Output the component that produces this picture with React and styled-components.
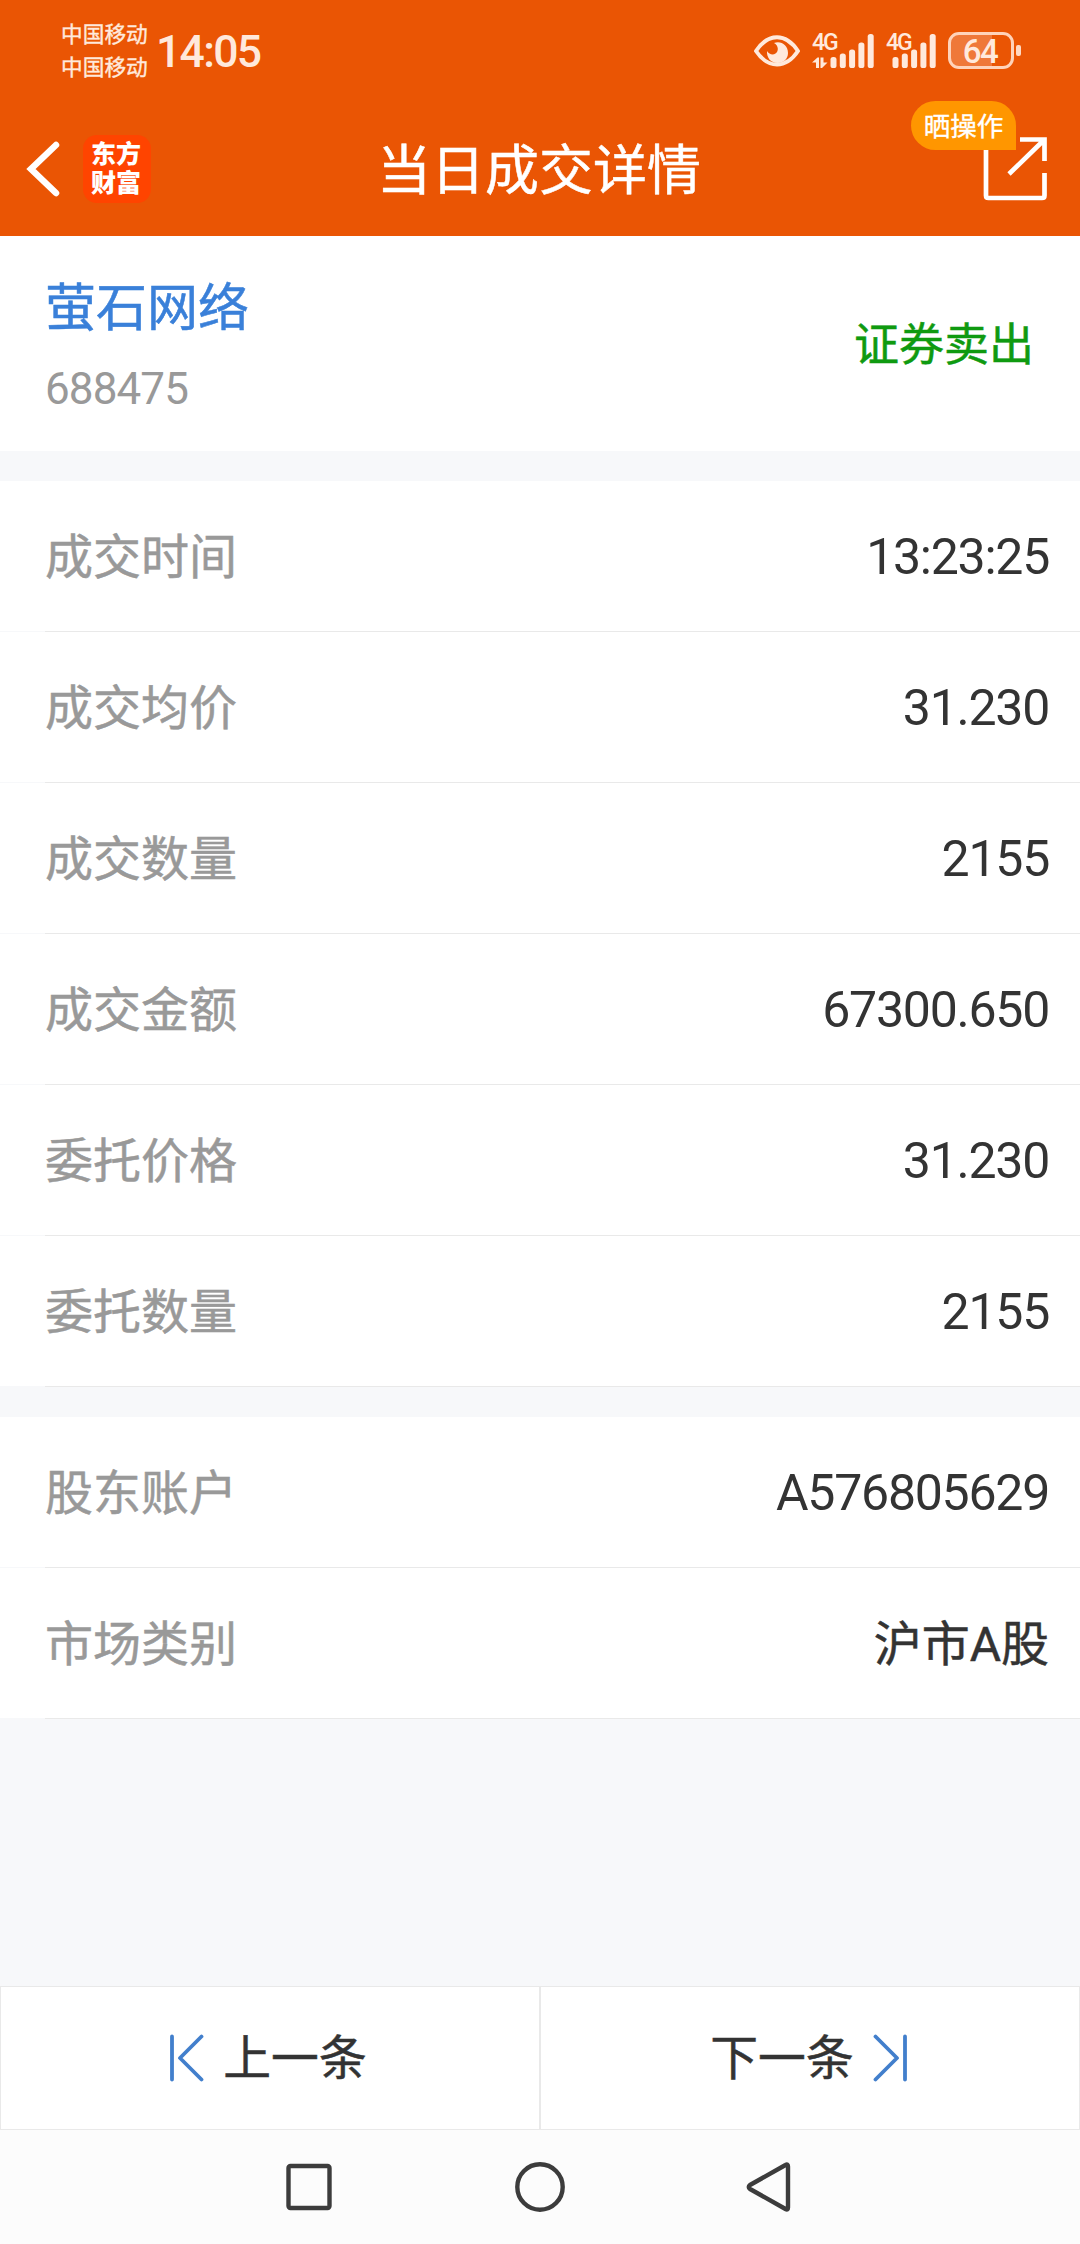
import React from "react";
import styled, { createGlobalStyle } from "styled-components";

const GlobalStyle = createGlobalStyle`
  * {
    box-sizing: border-box;
  }

  body {
    margin: 0;
    font-family: Roboto, 'Noto Sans CJK SC', sans-serif;
    background: #f7f8fa;
  }

  svg {
    display: block;
    flex-shrink: 0;
  }
`;

const Page = styled.div`
  display: flex;
  flex-direction: column;
  width: 1080px;
  height: 2244px;
  overflow: hidden;
`;

const Header = styled.header`
  height: 236px;
  background: #ea5504;
  color: white;
`;

const StatusBar = styled.div`
  display: flex;
  align-items: center;
  height: 101px;
  padding: 0 59px 0 61px;
  color: #ffe9dc;
`;

const Carriers = styled.div`
  width: 95px;
  font-size: 21.7px;
  line-height: 33px;
  white-space: nowrap;
  -webkit-text-stroke: 0.4px;
`;

const Clock = styled.div`
  padding-top: 2px;
  font-size: 44.5px;
  font-weight: 500;
  letter-spacing: -1.7px;
`;

const StatusIcons = styled.div`
  display: flex;
  align-items: center;
  margin-left: auto;
`;

const Signal = styled.div`
  position: relative;
  width: ${({ width }) => width}px;
  height: 34px;
  margin-left: 12px;
`;

const Network = styled.span`
  position: absolute;
  top: -3px;
  left: 0;
  font-size: 23px;
  font-weight: 500;
  line-height: 24px;
  letter-spacing: -2px;
`;

const Battery = styled.div`
  display: flex;
  align-items: center;
  margin-left: 12px;

  &:after {
    content: '';
    width: 5px;
    height: 11px;
    margin-left: 2px;
    border-radius: 2px;
    background: #ffd9c3;
  }
`;

const BatteryBody = styled.div`
  width: 66px;
  height: 37px;
  padding-right: 2px;
  border: 3px solid #ffd3ba;
  border-radius: 11px;
  background: linear-gradient(
    to right,
    #ef7839 ${({ level }) => level + 4}%,
    transparent ${({ level }) => level + 4}%
  );
  font-size: 33px;
  font-weight: 500;
  line-height: 33px;
  letter-spacing: -1.5px;
  text-align: center;
`;

const NavBar = styled.div`
  display: grid;
  grid-template-columns: 1fr auto 1fr;
  align-items: center;
  height: 135px;
  padding: 0 33px 0 26px;
`;

const NavLeft = styled.div`
  display: flex;
  align-items: center;
  gap: 23px;
`;

const Logo = styled.div`
  width: 68px;
  height: 68px;
  padding: 5px 0 0 8px;
  border-radius: 14px;
  background: #ff4400;
  font-size: 25px;
  font-weight: 900;
  line-height: 29px;
`;

const Title = styled.h1`
  margin: 0;
  padding: 7px 0 0 5px;
  font-size: 54px;
  font-weight: 400;
  line-height: 70px;
  -webkit-text-stroke: 0.5px;
`;

const Share = styled.div`
  position: relative;
  justify-self: end;
  width: 65px;
  height: 65px;
`;

const Badge = styled.span`
  position: absolute;
  top: -35px;
  right: 31px;
  width: 105px;
  height: 49px;
  border-radius: 25px 25px 0 25px;
  background: #ff9600;
  font-size: 26.5px;
  line-height: 52px;
  text-align: center;
  -webkit-text-stroke: 0.4px;
`;

const Summary = styled.section`
  display: flex;
  align-items: center;
  justify-content: space-between;
  height: 215px;
  padding: 0 46px 0 45px;
  background: white;
`;

const Stock = styled.div`
  padding-top: 10px;
`;

const StockName = styled.div`
  font-size: 51px;
  line-height: 80px;
  color: #3a80d9;
  -webkit-text-stroke: 0.5px;
`;

const StockCode = styled.div`
  font-size: 44px;
  line-height: 80px;
  letter-spacing: -0.9px;
  color: #999;
`;

const Direction = styled.div`
  padding-top: 5px;
  font-size: 45px;
  line-height: 60px;
  color: #0f9a10;
  -webkit-text-stroke: 0.5px;
`;

const Section = styled.section`
  margin-top: 30px;
  background: white;
`;

// the divider fades to a lighter tone under the left inset
const Row = styled.div`
  display: flex;
  align-items: center;
  justify-content: space-between;
  height: 151px;
  padding: 0 31px 0 45px;
  background: linear-gradient(to right, #f7f8fa 45px, #e9e9e9 45px) bottom /
    100% 1px no-repeat;
  font-size: 48px;
  line-height: 60px;
`;

const Label = styled.span`
  padding-top: 2px;
  color: #999;
  -webkit-text-stroke: 0.5px;
`;

const Value = styled.span`
  padding-top: ${({ text }) => (text ? 2 : 0)}px;
  font-size: ${({ text }) => (text ? 48 : 50)}px;
  letter-spacing: ${({ text }) => (text ? 0 : -1.25)}px;
  color: #333;
  -webkit-text-stroke: ${({ text }) => (text ? 0.5 : 0)}px;
`;

const Pager = styled.div`
  display: flex;
  height: 144px;
  margin-top: auto;
`;

const PagerButton = styled.button`
  display: flex;
  align-items: center;
  justify-content: center;
  gap: 19px;
  width: 50%;
  padding: 0 3px 0 0;
  border: 1px solid #e9e9e9;
  background: white;
  font-family: inherit;
  font-size: 47.8px;
  line-height: 60px;
  color: #333;
`;

const PagerText = styled.span`
  padding-top: 2px;
  -webkit-text-stroke: 0.5px;
`;

const SystemNav = styled.nav`
  display: flex;
  align-items: center;
  justify-content: center;
  gap: 180px;
  height: 114px;
  background: #fcfcfc;
`;

const DEAL_ROWS = [
  { label: "成交时间", value: "13:23:25" },
  { label: "成交均价", value: "31.230" },
  { label: "成交数量", value: "2155" },
  { label: "成交金额", value: "67300.650" },
  { label: "委托价格", value: "31.230" },
  { label: "委托数量", value: "2155" },
];

const ACCOUNT_ROWS = [
  { label: "股东账户", value: "A576805629" },
  { label: "市场类别", value: "沪市A股", text: true },
];

// top edge of each signal bar, lowest first
const BAR_TOPS = [23, 19.5, 15.5, 8.5, 0];

const EyeIcon = () => (
  <svg width="46" height="32" viewBox="0 0 46 32" fill="none">
    <path
      d="M2 16C8 7 15 2.2 23 2.2S38 7 44 16C38 25 31 29.5 23 29.5S8 25 2 16Z"
      stroke="#ffe9dc"
      strokeWidth="4"
      strokeLinejoin="round"
    />
    <path
      d="M20 8C27 5.5 34 10 34 18C34 24 29.5 28 23.5 28C17 28 12.5 23 13 16C15 19 18.5 20.5 21.5 18.5C25 16 24.5 10.5 20 8Z"
      fill="#ffe9dc"
    />
  </svg>
);

const SignalBars = ({ start, arrows }) => (
  <svg width={start + 44} height="34" fill="#ffe9dc">
    {BAR_TOPS.map((top, i) => (
      <rect
        key={top}
        x={start + i * 9.3}
        y={top}
        width="6"
        height={34 - top}
        rx="2.6"
      />
    ))}
    {arrows && (
      <path d="M0 28.5L5.5 23.5H7V34H4V28.5ZM8.5 23.5H11.5V28.5H15.5L10 34H8.5Z" />
    )}
  </svg>
);

const BackIcon = () => (
  <svg width="34" height="56" viewBox="0 0 34 56" fill="none">
    <path
      d="M30 4L5 28L30 52"
      stroke="white"
      strokeWidth="6.5"
      strokeLinecap="round"
    />
  </svg>
);

const ShareIcon = () => (
  <svg
    width="65"
    height="65"
    viewBox="0 0 65 65"
    fill="none"
    stroke="white"
    strokeWidth="4.7"
  >
    <path d="M4 14V59.5Q4 62 6.5 62H60Q62.5 62 62.5 59.5V37" />
    <path d="M38 3.5H62.5V25M61 5L27 38" />
  </svg>
);

const StepIcon = ({ flip }) => (
  <svg width="34" height="48" viewBox="0 0 34 48" fill="none">
    <path
      d="M2 2.5V45.5M31.5 2.5L10 24L31.5 45.5"
      transform={flip ? "translate(34 0) scale(-1 1)" : undefined}
      stroke="#427fcc"
      strokeWidth="3.8"
      strokeLinecap="round"
      strokeLinejoin="round"
    />
  </svg>
);

const NavIcon = ({ children }) => (
  <svg
    width="50"
    height="52"
    viewBox="0 0 50 52"
    fill="none"
    stroke="#3c3c3c"
    strokeWidth="4.4"
    strokeLinejoin="round"
  >
    {children}
  </svg>
);

const Rows = ({ rows }) => (
  <Section>
    {rows.map(({ label, value, text }) => (
      <Row key={label}>
        <Label>{label}</Label>
        <Value text={text ? 1 : undefined}>{value}</Value>
      </Row>
    ))}
  </Section>
);

const App = () => (
  <Page>
    <GlobalStyle />
    <Header>
      <StatusBar>
        <Carriers>
          <div>中国移动</div>
          <div>中国移动</div>
        </Carriers>
        <Clock>14:05</Clock>
        <StatusIcons>
          <EyeIcon />
          <Signal width={62}>
            <Network>4G</Network>
            <SignalBars start={18.5} arrows />
          </Signal>
          <Signal width={50}>
            <Network>4G</Network>
            <SignalBars start={6.5} />
          </Signal>
          <Battery>
            <BatteryBody level={64}>64</BatteryBody>
          </Battery>
        </StatusIcons>
      </StatusBar>
      <NavBar>
        <NavLeft>
          <BackIcon />
          <Logo>
            <div>东方</div>
            <div>财富</div>
          </Logo>
        </NavLeft>
        <Title>当日成交详情</Title>
        <Share>
          <ShareIcon />
          <Badge>晒操作</Badge>
        </Share>
      </NavBar>
    </Header>

    <Summary>
      <Stock>
        <StockName>萤石网络</StockName>
        <StockCode>688475</StockCode>
      </Stock>
      <Direction>证券卖出</Direction>
    </Summary>

    <Rows rows={DEAL_ROWS} />
    <Rows rows={ACCOUNT_ROWS} />

    <Pager>
      <PagerButton>
        <StepIcon />
        <PagerText>上一条</PagerText>
      </PagerButton>
      <PagerButton>
        <PagerText>下一条</PagerText>
        <StepIcon flip />
      </PagerButton>
    </Pager>

    <SystemNav>
      <NavIcon>
        <rect x="3.5" y="5" width="41" height="42" rx="2" />
      </NavIcon>
      <NavIcon>
        <circle cx="25" cy="26" r="22.7" />
      </NavIcon>
      <NavIcon>
        <path d="M43 5.5V46.5Q43 49.5 40.5 48L5 28Q2.5 26 5 24L40.5 4Q43 2.5 43 5.5Z" />
      </NavIcon>
    </SystemNav>
  </Page>
);

export default App;
